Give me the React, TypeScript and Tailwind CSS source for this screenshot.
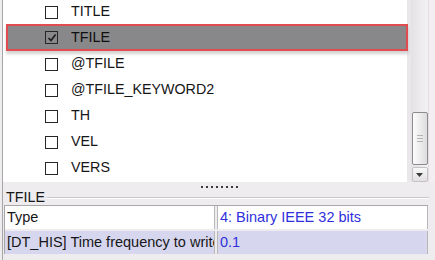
import { Fragment } from 'react';

const ITEMS = [
  { name: 'TITLE', checked: false },
  { name: 'TFILE', checked: true, selected: true },
  { name: '@TFILE', checked: false },
  { name: '@TFILE_KEYWORD2', checked: false },
  { name: 'TH', checked: false },
  { name: 'VEL', checked: false },
  { name: 'VERS', checked: false },
];

const PROPS = [
  { key: 'Type', value: '4: Binary IEEE 32 bits', bg: 'bg-white' },
  { key: '[DT_HIS] Time frequency to write', value: '0.1', bg: 'bg-[#d6d6ee]' },
];

function CheckBox({ checked }: { checked: boolean }) {
  return (
    <div className={`w-[13px] h-[13px] border-[1.5px] border-[#262626] flex items-center justify-center ${checked ? '' : 'bg-white'}`}>
      {checked && (
        <svg width="10" height="10" viewBox="0 0 10 10">
          <path d="M1.5 5 L4 7.6 L8.6 1.6" fill="none" stroke="#1a1a1a" strokeWidth="1.6" />
        </svg>
      )}
    </div>
  );
}

export default function App() {
  return (
    <div className="w-[435px] h-[260px] bg-[#eeecee] overflow-hidden font-['Liberation_Sans',Arial,sans-serif] text-[14.3px] text-[#161616]">
      <div className="ml-[2px] h-full border-l border-[#a6a6a6] flex flex-col">
        {/* list + scrollbar */}
        <div className="h-[182px] flex shrink-0">
          <div className="flex-1 bg-white flex flex-col">
            <div className="-mt-[1px]">
              {ITEMS.map(it => (
                <Fragment key={it.name}>
                  {it.selected ? (
                    <div className="h-[27px] -mt-[1px] ml-[3px] -mr-[1px] relative z-10 flex items-center bg-[#888789] border-2 border-[#e04c50] shadow-[0_3px_3px_rgba(0,0,0,0.18)]">
                      <div className="ml-[37px]"><CheckBox checked={it.checked} /></div>
                      <span className="ml-[13px] text-[#101010]">{it.name}</span>
                    </div>
                  ) : (
                    <div className="h-[26px] flex items-center">
                      <div className="ml-[42px]"><CheckBox checked={it.checked} /></div>
                      <span className="ml-[13px]">{it.name}</span>
                    </div>
                  )}
                </Fragment>
              ))}
            </div>
          </div>
          <div className="w-[4px] bg-[#e9e7e9]" />
          <div className="w-[17px] bg-gradient-to-r from-[#e4e2e4] to-[#f3f1f3] flex flex-col justify-end items-center">
            <div className="w-[16px] h-[53px] mb-[2px] rounded-[2px] border border-[#8c8c8c] bg-gradient-to-r from-[#fdfdfd] to-[#dedcde] flex flex-col items-center justify-center gap-[2px]">
              <div className="w-[6px] h-px bg-[#b4b4b4]" />
              <div className="w-[6px] h-px bg-[#b4b4b4]" />
              <div className="w-[6px] h-px bg-[#b4b4b4]" />
            </div>
            <div className="w-[16px] h-[15px] rounded-[2px] border border-[#c4c2c4] bg-gradient-to-b from-[#f8f8f8] to-[#e2e0e2] flex items-center justify-center">
              <svg width="7" height="4" viewBox="0 0 7 4"><path d="M0 0 H7 L3.5 4 Z" fill="#3a3a3a" /></svg>
            </div>
          </div>
          <div className="w-[7px] bg-[#f2eef2] border-l border-[#e2dee2]" />
        </div>

        {/* splitter */}
        <div className="h-[9px] shrink-0 flex items-center justify-center gap-[3px] pt-[1px]">
          {Array.from({ length: 8 }).map((_, i) => (
            <div key={i} className="w-[2px] h-[2px] bg-[#3a3a3a]" />
          ))}
        </div>

        {/* group header */}
        <div className="h-[13px] shrink-0 flex items-center pl-[3px] pr-[6px]">
          <span className="leading-none">TFILE</span>
          <div className="flex-1 ml-[2px] border-t border-[#c9c7c9] border-b border-b-white" />
        </div>

        {/* property grid */}
        <div className="mt-[1px] ml-[1px] mr-[7px] border-t border-l border-[#a8a8a8] flex flex-col gap-[2px] bg-[#eeecee] text-[14.5px]">
          {PROPS.map(p => (
            <div key={p.key} className="flex h-[23px] gap-[2px]">
              <div className={`w-[210px] ${p.bg} border-r border-[#b8b8b8] flex items-center pl-[2px] overflow-hidden whitespace-nowrap`}>
                {p.key}
              </div>
              <div className={`flex-1 ${p.bg} border-l border-r border-[#b8b8b8] flex items-center pl-[2px] text-[#2f2fdc] whitespace-nowrap`}>
                {p.value}
              </div>
            </div>
          ))}
        </div>
      </div>
    </div>
  );
}
